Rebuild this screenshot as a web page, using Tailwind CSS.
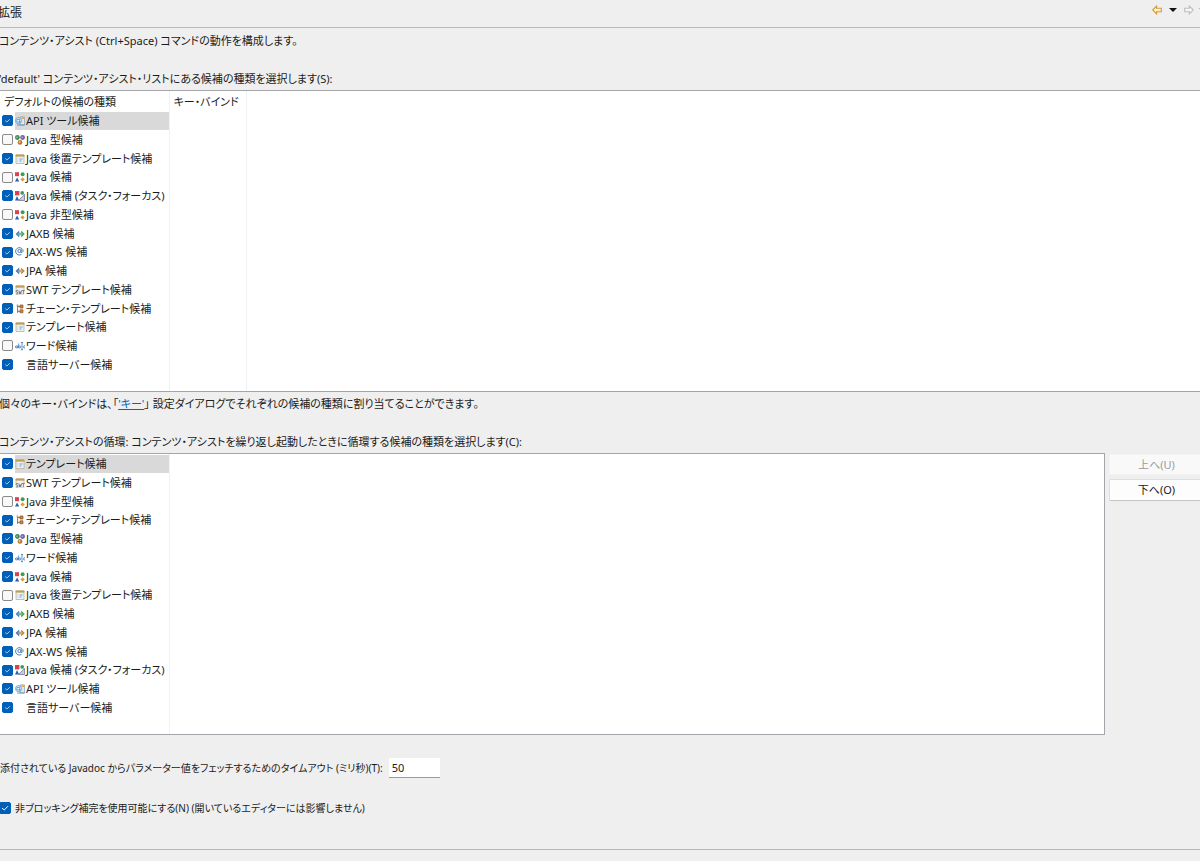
<!DOCTYPE html>
<html lang="ja">
<head>
    <meta charset="UTF-8">
    <meta name="viewport" content="width=device-width, initial-scale=1">
    <title>拡張</title>
    <script src="https://cdn.jsdelivr.net/npm/@tailwindcss/browser@4"></script>
</head>
<body class="min-h-screen overflow-x-hidden bg-[#efefef] font-['Noto_Sans','Noto_Sans_CJK_JP',sans-serif] text-[11px] leading-[18px] text-[#1b1b1b] [font-feature-settings:'palt']">

<header class="flex h-7 items-center justify-between border-b border-[#b8b8ba] pb-0.5">
    <h1 class="-ml-0.5 text-[12px]">拡張</h1>
    <nav class="-mr-2 mb-1.5 flex items-center">
        <button type="button" aria-label="戻る" class="mr-1.5">
            <svg class="h-2.5 w-2.5" viewBox="0 0 10 10"><path d="M.7 5 4.6 1.1V3.3H9.3V6.7H4.6V8.9Z" fill="#fff3cd" stroke="#d9982f" stroke-width="1.1"/></svg>
        </button>
        <button type="button" aria-label="戻る履歴" class="mr-1.5">
            <svg class="h-2.5 w-2.5" viewBox="0 0 10 10"><path d="M1 3H9L5 7Z" fill="#111"/></svg>
        </button>
        <button type="button" aria-label="進む" class="mr-1">
            <svg class="h-2.5 w-2.5" viewBox="0 0 10 10"><path d="M9.3 5 5.4 1.1V3.3H.7V6.7H5.4V8.9Z" fill="#f6f6f6" stroke="#bdbdbd" stroke-width="1.1"/></svg>
        </button>
        <button type="button" aria-label="進む履歴">
            <svg class="h-2.5 w-2.5" viewBox="0 0 10 10"><path d="M1 3H9L5 7Z" fill="#777"/></svg>
        </button>
    </nav>
</header>

<main class="border-b border-[#b8b8ba] pb-8">
    <p class="-ml-px pt-1">コンテンツ・アシスト (Ctrl+Space) コマンドの動作を構成します。</p>
    <p class="-ml-px pt-5 pb-0.5" id="default-label">'default' コンテンツ・アシスト・リストにある候補の種類を選択します(S):</p>

    <div class="border-y border-[#a3a5ab] bg-white">
        <table class="w-full table-fixed border-collapse" aria-labelledby="default-label">
            <colgroup><col class="w-[169px]"><col class="w-[77px]"><col></colgroup>
            <thead>
                <tr class="h-5 text-left">
                    <th class="border-r border-[#edf2f7] pt-0.5 pl-1 font-normal">デフォルトの候補の種類</th>
                    <th class="border-r border-[#edf2f7] pt-0.5 pl-1 font-normal">キー・バインド</th>
                    <th></th>
                </tr>
            </thead>
            <tbody id="default-list"></tbody>
        </table>
    </div>

    <p class="-ml-px pt-[3px]">個々のキー・バインドは、「<a href="#" class="text-[#0067c0] underline">'キー'</a>」 設定ダイアログでそれぞれの候補の種類に割り当てることができます。</p>
    <p class="-ml-px pt-5 pb-0.5" id="cycle-label">コンテンツ・アシストの循環: コンテンツ・アシストを繰り返し起動したときに循環する候補の種類を選択します(C):</p>

    <div class="flex gap-1">
        <div class="flex-1 border border-l-0 border-[#a3a5ab] bg-white">
            <table class="w-full table-fixed border-collapse" aria-labelledby="cycle-label">
                <colgroup><col class="w-[169px]"><col></colgroup>
                <tbody id="cycle-list"></tbody>
            </table>
        </div>
        <div class="-mr-1 flex w-[95px] flex-col gap-1 pt-px">
            <button type="button" disabled class="h-[21px] rounded-xs border border-[#f3f3f3] bg-[#f9f9f9] text-[#9b9b9b]">上へ(U)</button>
            <button type="button" class="h-[22px] rounded-xs border border-[#dedede] border-b-[#c4c4c4] bg-[#fdfdfd]">下へ(O)</button>
        </div>
    </div>

    <div class="flex items-center gap-1.5 pt-[23px]">
        <label for="timeout" class="text-[10px]">添付されている Javadoc からパラメーター値をフェッチするためのタイムアウト (ミリ秒)(T):</label>
        <input id="timeout" type="text" value="50" class="h-5 w-[51px] border-b border-[#9a9a9a] bg-white px-[3px] outline-none">
    </div>

    <label class="flex items-center gap-1 pt-[21px]">
        <span class="-ml-px grid">
            <input type="checkbox" checked class="peer col-start-1 row-start-1 size-3 appearance-none rounded-xs border border-[#8a8a8a] bg-white checked:border-[#005fb8] checked:bg-[#005fb8]">
            <svg class="pointer-events-none invisible col-start-1 row-start-1 size-3 peer-checked:visible" viewBox="0 0 12 12"><path d="M3 6 5.2 8 9 4.2" fill="none" stroke="#fff" stroke-width="1"/></svg>
        </span>
        <span class="text-[10px]">非ブロッキング補完を使用可能にする(N) (開いているエディターには影響しません)</span>
    </label>
</main>

<script>
    const shapes = '<path d="M0 .2H4V4.2H0Z" fill="#d9434e"/><circle cx="7.6" cy="2.2" r="2" fill="#3f9a60"/><path d="M2.1 5.5 4.2 9.4H0Z" fill="#2f63a5"/><path d="M7.6 5.2 9.8 7.4 7.6 9.6 5.4 7.4Z" fill="#d99a3c"/>';
    const page = '<path d="M1 1H9V9.5H1Z" fill="#e8f2f9" stroke="#c0b08c" stroke-width=".8"/><path d="M.6 .5H9.4V2.6H.6Z" fill="#c29a50"/>';

    const icons = {
        api: '<path d="M5 1H9.5V9H5Z" fill="#dce9f3" stroke="#86a9c6" stroke-width=".8"/><path d="M6.5 .7H9.5V3H6.5Z" fill="#e5ae5a"/><circle cx="3.5" cy="4.6" r="3" fill="#eef6fb" stroke="#6f9dc4" stroke-width=".9"/><path d="M4.7 6V3.3H3A1.3 1.3 0 0 0 3 6H6M2 9H9.5" fill="none" stroke="#4e86b5" stroke-width=".8"/>',
        type: '<circle cx="2.4" cy="2.5" r="2.4" fill="#3f8d58"/><circle cx="7.6" cy="2.5" r="2.4" fill="#7b61a8"/><circle cx="5" cy="7.4" r="2.4" fill="#bb7a35"/><circle cx="2" cy="2.2" r=".8" fill="#a7d5b2"/><circle cx="7.2" cy="2.2" r=".8" fill="#c9b9e0"/><circle cx="4.6" cy="7" r=".9" fill="#edc38c"/>',
        template: page + '<path d="M4.5 5H7.5M4.5 7H6.5" stroke="#5f95c5" stroke-width=".9"/><path d="M2.2 5H3.2M2.2 7H3.2" stroke="#a9c7de" stroke-width=".8"/>',
        java: shapes,
        task: '<path d="M0 0H4.4V4.4H0Z" fill="#d9434e"/><circle cx="7.2" cy="1.9" r="1.9" fill="#3f9a60"/><path d="M2 5 4.2 9.5H0Z" fill="#2f63a5"/><path d="M9.5 3.3V9.5H3.6Z" fill="#c9c9e2" stroke="#76769f" stroke-width=".8"/>',
        jaxb: '<path d="M.6 5 4.2 1.4V3.7H5V6.3H4.2V8.6Z" fill="#4386b9"/><path d="M9.8 5 6.2 1.4V3.7H5V6.3H6.2V8.6Z" fill="#45a65b"/><path d="M3 5H7.4" stroke="#dceee7" stroke-width=".7"/>',
        jpa: '<path d="M.6 5 4.2 1.4V3.7H5V6.3H4.2V8.6Z" fill="#5278ad"/><path d="M9.8 5 6.2 1.4V3.7H5V6.3H6.2V8.6Z" fill="#c98537"/><path d="M3 5H7.4" stroke="#f1ebe1" stroke-width=".7"/>',
        jaxws: '<circle cx="4.5" cy="4" r="1.6" fill="none" stroke="#4b7fb0" stroke-width="1"/><path d="M6.3 2.3 5.9 5.1Q7.3 6.2 8.2 4.2A3.8 3.7 0 1 0 6.4 7.5" fill="none" stroke="#4b7fb0" stroke-width="1"/>',
        swt: page + '<path d="M.5 4.8H9.8V9.6H.5Z" fill="#f2f2f2"/><path d="M3 5.5H1.2V7.1H2.8V8.9H1M3.8 5.3 4.5 8.9 5.1 6.6 5.8 8.9 6.5 5.3M7 5.5H9.8M8.4 5.5V9" fill="none" stroke="#5d5d5d" stroke-width=".7"/>',
        chain: '<path d="M2.6 .6V8.9M2.6 2.5H5M2.6 7.3H5" fill="none" stroke="#555" stroke-width=".8"/><path d="M5 1H8V4H5ZM5 5.8H8V8.8H5Z" fill="#c9843c" stroke="#8f5628" stroke-width=".7"/><path d="M1.6 .8H3.4V2.4H1.6Z" fill="#d0a060"/>',
        word: '<circle cx="1.3" cy="5.9" r="1" fill="none" stroke="#3f78b5" stroke-width=".8"/><path d="M2.5 4.6V7.2M3.6 2.5V7.2M5.9 1.5H8.1M5.9 8.7H8.1M7 1.5V8.7M10 4.8Q8.5 4.4 8.5 5.9T10 7" fill="none" stroke="#3f78b5" stroke-width=".8"/><circle cx="4.7" cy="5.9" r="1.1" fill="none" stroke="#3f78b5" stroke-width=".8"/>',
        none: ''
    };

    const names = {
        api: ['api', 'API ツール候補'],
        type: ['type', 'Java 型候補'],
        postfix: ['template', 'Java 後置テンプレート候補'],
        java: ['java', 'Java 候補'],
        task: ['task', 'Java 候補 (タスク・フォーカス)'],
        nontype: ['java', 'Java 非型候補'],
        jaxb: ['jaxb', 'JAXB 候補'],
        jaxws: ['jaxws', 'JAX-WS 候補'],
        jpa: ['jpa', 'JPA 候補'],
        swt: ['swt', 'SWT テンプレート候補'],
        chain: ['chain', 'チェーン・テンプレート候補'],
        template: ['template', 'テンプレート候補'],
        word: ['word', 'ワード候補'],
        server: ['none', '言語サーバー候補']
    };

    function fillList(id, keys, unchecked, extraCells) {
        const rows = keys.map((key, idx) => {
            const [icon, text] = names[key];
            return `
                <tr class="h-[19px] nth-[4n]:h-[18px]">
                    <td class="border-r border-[#edf2f7] p-0">
                        <label class="flex items-center pl-0.5">
                            <span class="grid">
                                <input type="checkbox" ${unchecked.includes(key) ? '' : 'checked'} class="peer col-start-1 row-start-1 size-[11px] appearance-none rounded-xs border border-[#8a8a8a] bg-[#f8f8f8] checked:border-[#005fb8] checked:bg-[#005fb8]">
                                <svg class="pointer-events-none invisible col-start-1 row-start-1 size-[11px] peer-checked:visible" viewBox="0 0 11 11"><path d="M3.2 5.5 4.9 7 7.8 4.3" fill="none" stroke="#b9d6ef" stroke-width=".9"/></svg>
                            </span>
                            <span class="ml-0.5 flex flex-1 items-center gap-px ${idx === 0 ? 'bg-[#d9d9d9]' : ''}">
                                <svg class="size-2.5" viewBox="0 0 10 10">${icons[icon]}</svg>
                                ${text}
                            </span>
                        </label>
                    </td>
                    ${extraCells}
                </tr>`;
        });
        // empty space under the last item, the column lines run through it
        rows.push(`<tr class="h-[17px]"><td class="border-r border-[#edf2f7]"></td>${extraCells}</tr>`);
        document.getElementById(id).innerHTML = rows.join('');
    }

    fillList('default-list',
        ['api', 'type', 'postfix', 'java', 'task', 'nontype', 'jaxb', 'jaxws', 'jpa', 'swt', 'chain', 'template', 'word', 'server'],
        ['type', 'java', 'nontype', 'word'],
        '<td class="border-r border-[#edf2f7]"></td><td></td>');

    fillList('cycle-list',
        ['template', 'swt', 'nontype', 'chain', 'type', 'word', 'java', 'postfix', 'jaxb', 'jpa', 'jaxws', 'task', 'api', 'server'],
        ['nontype', 'postfix'],
        '<td></td>');
</script>
</body>
</html>
